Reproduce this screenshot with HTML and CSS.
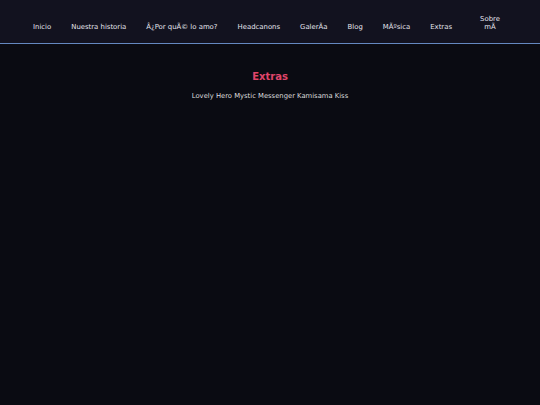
FILE: index.html
```html
<!DOCTYPE html>
<html lang="es">
<head>
    <meta charset="UTF-8">
    <meta name="viewport" content="width=device-width, initial-scale=1.0">
    <title>Extras</title>
    <link rel="stylesheet" href="styles.css">
</head>
<body>

    <header class="header">
        <nav class="nav">
            <a href="#">Inicio</a>
            <a href="#">Nuestra historia</a>
            <a href="#">Â¿Por quÃ© lo amo?</a>
            <a href="#">Headcanons</a>
            <a href="#">GalerÃ&shy;a</a>
            <a href="#">Blog</a>
            <a href="#">MÃºsica</a>
            <a href="#">Extras</a>
            <a href="#" class="nav-last">Sobre mÃ&shy;</a>
        </nav>
    </header>

    <main class="content">
        <h2>Extras</h2>
        <p>Lovely Hero Mystic Messenger Kamisama Kiss</p>
    </main>

</body>
</html>
```

FILE: styles.css
```css
body {
    margin: 0;
    background-color: #0a0b12;
    color: #dddddd;
    font-family: "DejaVu Sans", Verdana, sans-serif;
    min-height: 405px;
}
.header {
    background-color: #12121f;
    border-bottom: 1px solid #6488c0;
    height: 44px;
    box-sizing: border-box;
    padding: 0 33px 12px 33px;
    display: flex;
    align-items: flex-end;
}
.nav {
    display: flex;
    align-items: flex-end;
    gap: 20px;
}
.nav a {
    color: #e4e4ee;
    text-decoration: none;
    font-size: 6.9px;
    white-space: nowrap;
}
.nav .nav-last {
    white-space: normal;
    text-align: center;
    width: 30px;
    margin-left: 3px;
}
.content {
    text-align: center;
    padding-top: 27px;
}
.content h2 {
    color: #e0456a;
    font-size: 10px;
    margin: 0 0 10px 0;
}
.content p {
    font-size: 6.8px;
    margin: 0;
}
```
